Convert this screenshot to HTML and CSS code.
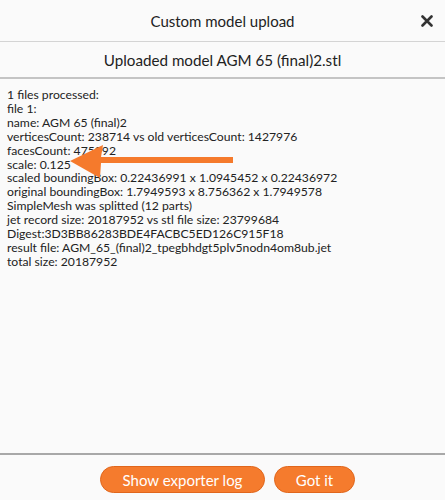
FILE: index.html
```html
<!DOCTYPE html>
<html lang="en">
<head>
    <meta charset="UTF-8">
    <meta name="viewport" content="width=device-width, initial-scale=1.0">
    <title>Custom model upload</title>
    <link rel="stylesheet" href="styles.css">
</head>
<body>

    <div class="dialog">
        <!-- Cabecera -->
        <div class="header">
            <span class="title">Custom model upload</span>
            <svg class="close" width="12" height="12" viewBox="0 0 12 12">
                <path d="M1.5 1.5 L10.5 10.5 M10.5 1.5 L1.5 10.5" stroke="#333" stroke-width="2.6" stroke-linecap="round"/>
            </svg>
        </div>

        <div class="subtitle">Uploaded model AGM 65 (final)2.stl</div>

        <!-- Log del proceso -->
        <div class="log">
            <p>1 files processed:</p>
            <p>file 1:</p>
            <p>name: AGM 65 (final)2</p>
            <p>verticesCount: 238714 vs old verticesCount: 1427976</p>
            <p>facesCount: 475992</p>
            <p>scale: 0.125</p>
            <p>scaled boundingBox: 0.22436991 x 1.0945452 x 0.22436972</p>
            <p>original boundingBox: 1.7949593 x 8.756362 x 1.7949578</p>
            <p>SimpleMesh was splitted (12 parts)</p>
            <p>jet record size: 20187952 vs stl file size: 23799684</p>
            <p>Digest:3D3BB86283BDE4FACBC5ED126C915F18</p>
            <p>result file: AGM_65_(final)2_tpegbhdgt5plv5nodn4om8ub.jet</p>
            <p>total size: 20187952</p>

            <svg class="arrow" width="165" height="38" viewBox="0 0 165 38">
                <polygon points="0,18 33,2 31,14 163,14 163,20 31,20 30,35" fill="#f57a2c"/>
            </svg>
        </div>

        <div class="footer">
            <button class="btn btn-log">Show exporter log</button>
            <button class="btn btn-ok">Got it</button>
        </div>
    </div>

</body>
</html>
```

FILE: styles.css
```css
/* Estilos generales */
* {
    box-sizing: border-box;
}

body {
    margin: 0;
    font-family: 'Lato', 'Noto Sans', sans-serif;
    background: #fafafa;
    color: #222;
}

.dialog {
    width: 445px;
    height: 500px;
    display: flex;
    flex-direction: column;
    background: #fafafa;
}

.header {
    position: relative;
    height: 42px;
    display: flex;
    align-items: center;
    justify-content: center;
    border-bottom: 1px solid #d4d4d4;
}

.title {
    font-size: 15px;
    color: #222;
}

.close {
    position: absolute;
    right: 12px;
    top: 15px;
}

.subtitle {
    height: 37px;
    display: flex;
    align-items: center;
    justify-content: center;
    font-size: 15.2px;
    color: #222;
    border-bottom: 2px solid #c4c4c4;
}

.log {
    position: relative;
    flex: 1;
    padding: 9px 7px 0;
    font-size: 12.2px;
    line-height: 13.9px;
}

.log p {
    margin: 0;
}

.arrow {
    position: absolute;
    left: 70px;
    top: 64px;
}

.footer {
    height: 47px;
    border-top: 2px solid #a8a8a8;
    display: flex;
    justify-content: center;
    align-items: flex-start;
    gap: 9px;
    padding-top: 11px;
    padding-left: 10px;
}

.btn {
    height: 27px;
    padding: 0;
    background: #f57b2d;
    color: #fff;
    border: 1px solid #e0661c;
    border-radius: 14px;
    font-family: 'Lato', 'Noto Sans', sans-serif;
    font-size: 15px;
    cursor: pointer;
}

.btn-log {
    width: 165px;
}

.btn-ok {
    width: 81px;
}
```
